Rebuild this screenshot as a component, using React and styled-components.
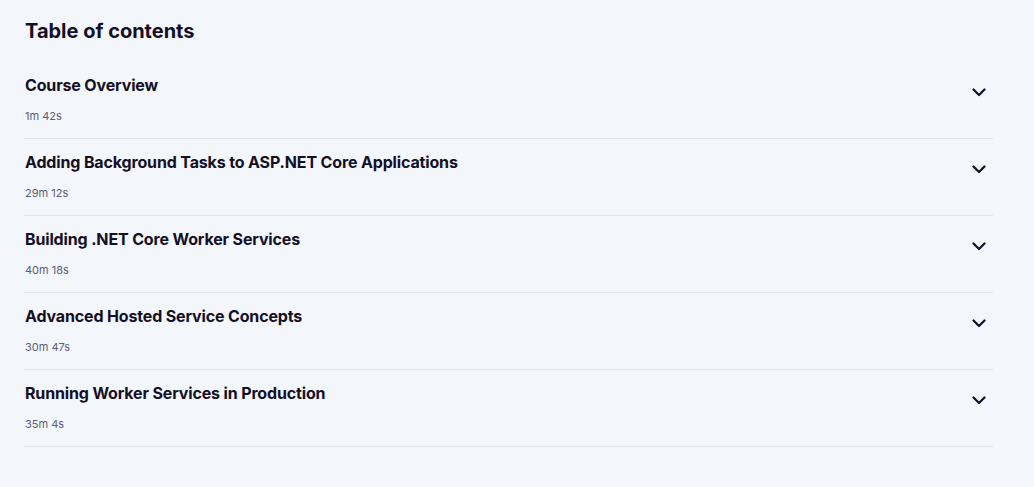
import React from 'react';
import styled, { createGlobalStyle } from 'styled-components';

const sections = [
  { title: 'Course Overview', duration: '1m 42s' },
  { title: 'Adding Background Tasks to ASP.NET Core Applications', duration: '29m 12s' },
  { title: 'Building .NET Core Worker Services', duration: '40m 18s' },
  { title: 'Advanced Hosted Service Concepts', duration: '30m 47s' },
  { title: 'Running Worker Services in Production', duration: '35m 4s' },
];

const GlobalStyle = createGlobalStyle`
  body {
    margin: 0;
    background: #f3f6fa;
    font-family: Inter, "Liberation Sans", sans-serif;
    color: #130f25;
  }
`;

const Chevron = () => (
  <svg width="14" height="9" viewBox="0 0 14 9" fill="none">
    <polyline
      points="1.5,1.5 7,7 12.5,1.5"
      stroke="#130f25"
      strokeWidth="2.2"
      strokeLinecap="round"
      strokeLinejoin="round"
    />
  </svg>
);

const App = () => {
  return (
    <Page>
      <GlobalStyle />
      <Heading>Table of contents</Heading>
      <List>
        {sections.map((s, i) => (
          <Row key={i}>
            <Info>
              <Title>{s.title}</Title>
              <Duration>{s.duration}</Duration>
            </Info>
            <Toggle aria-label="expand">
              <Chevron />
            </Toggle>
          </Row>
        ))}
      </List>
    </Page>
  );
};

export default App;

const Page = styled.div`
  width: 100%;
  min-height: 487px;
  padding: 17px 41px 0 24px;
  box-sizing: border-box;
`;

const Heading = styled.h2`
  margin: 0 0 17px 1px;
  font-size: 20px;
  line-height: 28px;
  font-weight: 700;
  letter-spacing: 0;
`;

const List = styled.div`
  display: flex;
  flex-direction: column;
`;

const Row = styled.div`
  display: flex;
  justify-content: space-between;
  align-items: flex-start;
  padding: 13px 0 14px 1px;
  border-bottom: 1px solid #e1e4ea;
`;

const Info = styled.div`
  display: flex;
  flex-direction: column;
  gap: 13px;
`;

const Title = styled.div`
  font-size: 16px;
  line-height: 20px;
  font-weight: 700;
  letter-spacing: -0.15px;
`;

const Duration = styled.div`
  font-size: 11px;
  line-height: 16px;
  color: #5b5d78;
`;

const Toggle = styled.button`
  width: 28px;
  height: 28px;
  margin: 3px 0 0;
  padding: 0;
  border: none;
  background: transparent;
  display: flex;
  align-items: center;
  justify-content: center;
  cursor: pointer;
`;
